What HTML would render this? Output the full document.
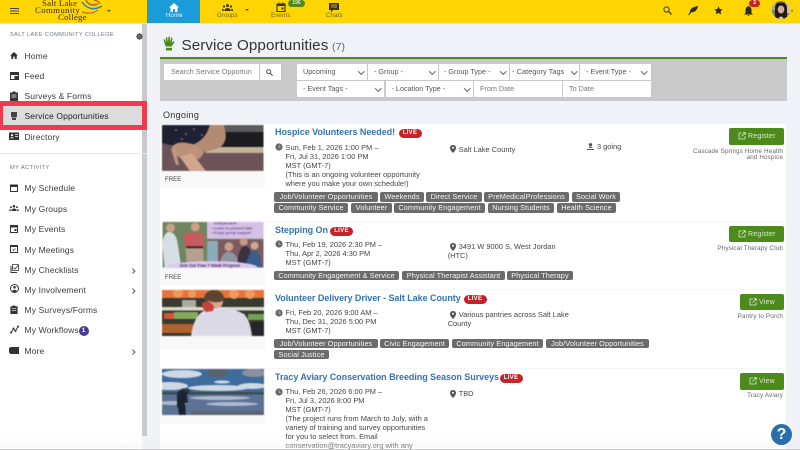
<!DOCTYPE html>
<html><head><meta charset="utf-8"><style>
html,body{margin:0;padding:0;width:800px;height:450px;overflow:hidden;background:#f0f2f7}
#r{position:absolute;left:0;top:0;width:800px;height:450px;overflow:hidden;font-family:"Liberation Sans",sans-serif;filter:blur(.35px)}
.a,.t,.tag,svg{position:absolute}
.t{white-space:nowrap;color:#444;font-size:8px;letter-spacing:.1px;line-height:9px}
.s{font-size:8.5px;color:#3a3a3a;letter-spacing:.13px;left:24.5px}
.nav{font-size:6px;color:#ddd;letter-spacing:.2px}
.h{font-size:9px;font-weight:bold;color:#3473b0;letter-spacing:-.05px;left:275px;line-height:9px}
.tag{background:#6b6b6b;color:#f6f6f6;font-size:7.3px;letter-spacing:.1px;height:9.5px;line-height:9.5px;text-align:center;border-radius:2px;white-space:nowrap}
.live{position:absolute;background:#c5222a;color:#fff;font-size:6px;font-weight:bold;height:9px;line-height:9px;width:23px;text-align:center;border-radius:5px;letter-spacing:.3px}
.btn{position:absolute;background:#4c8a1c;border-radius:2px;height:16.5px}
.bt{font-size:7px;color:#dfead4;letter-spacing:.2px}
.f{position:absolute;background:#fff;height:16px;line-height:16px;color:#555;font-size:7.2px;letter-spacing:.02px;padding-left:6px;box-sizing:border-box;white-space:nowrap;overflow:hidden}
.f i{position:absolute;right:4px;top:4.5px;width:3.5px;height:3.5px;border-right:.8px solid #666;border-bottom:.8px solid #666;transform:rotate(45deg)}
.free{position:absolute;left:160px;width:105px;background:#f8f8f8}
.fr{left:165px;font-size:6.1px;color:#444;letter-spacing:0}
.org{font-size:6.3px;color:#666;text-align:right;right:17px;line-height:6px;letter-spacing:.13px}
.d{left:285.5px;line-height:9.1px;color:#444;font-size:7.4px;letter-spacing:.02px}
.ic{fill:#333}
.ch{position:absolute;left:130.5px;width:2.5px;height:2.5px;border-top:.8px solid #555;border-right:.8px solid #555;transform:rotate(45deg)}
.img{filter:blur(.6px)}
</style></head><body><div id="r">

<!-- top bar -->
<div class="a" style="left:0;top:0;width:800px;height:23px;background:#ffd500"></div>
<div class="a" style="left:0;top:23px;width:800px;height:1px;background:#e6e6e6"></div>
<div class="a" style="left:10px;top:8px;width:9px;height:1px;background:#444;box-shadow:0 2.5px 0 #444,0 5px 0 #444"></div>
<div class="t" style="left:42px;top:-1px;font:8.8px/8px 'Liberation Serif',serif;color:#332c10;letter-spacing:.2px">Salt Lake</div>
<div class="t" style="left:35px;top:6px;font:8.8px/8px 'Liberation Serif',serif;color:#332c10;letter-spacing:.35px">Community</div>
<div class="t" style="left:58px;top:13px;font:8.8px/8px 'Liberation Serif',serif;color:#332c10;letter-spacing:.2px">College</div>
<svg style="left:81px;top:0" width="22" height="14" viewBox="0 0 22 14" fill="none"><path d="M1 2Q9 13 21 6" stroke="#2b83b5" stroke-width="1.4"/><path d="M5 0Q8 7 17 4" stroke="#a87419" stroke-width="1.6"/><path d="M13 0Q18 1 19 4" stroke="#c0392b" stroke-width="1"/><path d="M1 12Q10 15 17 10" stroke="#b65b1d" stroke-width="1"/></svg>
<div class="a" style="left:107px;top:9.5px;border:2px solid transparent;border-top:2.5px solid #555;border-bottom:0"></div>

<div class="a" style="left:147px;top:0;width:53px;height:23px;background:#1a9cd8"></div>
<svg style="left:169px;top:3px" width="10" height="9" viewBox="0 0 10 9"><path d="M5 0L0 4.5H1.5V9H4V6H6V9H8.5V4.5H10Z" fill="#fff"/></svg>
<div class="t nav" style="left:166px;top:12px;color:#e8f4fb">Home</div>
<svg style="left:222px;top:4px" width="11" height="7" viewBox="0 0 11 7"><g fill="#3a3318"><circle cx="5.5" cy="1.5" r="1.5"/><circle cx="2" cy="2.5" r="1.1"/><circle cx="9" cy="2.5" r="1.1"/><path d="M2.5 7V5.5Q5.5 2.5 8.5 5.5V7ZM0 7V5.5L1.5 4.5 1.8 7ZM11 7V5.5L9.5 4.5 9.2 7Z"/></g></svg>
<div class="t nav" style="left:217px;top:12px;color:#6e6320">Groups</div>
<div class="a" style="left:245px;top:8.5px;border:2px solid transparent;border-top:2.5px solid #444;border-bottom:0"></div>
<svg style="left:276px;top:2px" width="10" height="10" viewBox="0 0 10 10"><path d="M1 2H9V9.5H1Z" fill="none" stroke="#3a3318" stroke-width="1.1"/><path d="M1 2H9V4H1ZM2.5 0.5H3.5V2H2.5ZM6.5 0.5H7.5V2H6.5ZM5.5 5.5H7.5V7.5H5.5Z" fill="#3a3318"/></svg>
<div class="a" style="left:288px;top:0;width:17px;height:7px;background:#4c8a1c;border-radius:4px;color:#dfead4;font:bold 5px/7px 'Liberation Sans',sans-serif;text-align:center">196</div>
<div class="t nav" style="left:271px;top:12px;color:#6e6320">Events</div>
<svg style="left:329px;top:3px" width="10" height="10" viewBox="0 0 10 10"><path d="M0 0H10V7H4L2 9.5V7H0Z" fill="#3a3318"/><path d="M2 2H8M2 4H8" stroke="#ffd500" stroke-width=".7"/></svg>
<div class="t nav" style="left:326px;top:12px;color:#6e6320">Chats</div>

<svg style="left:663px;top:6px" width="9" height="9" viewBox="0 0 9 9" fill="none" stroke="#4a4420" stroke-width="1.1"><circle cx="3.5" cy="3.5" r="2.6"/><path d="M5.5 5.5L8.5 8.5" stroke-width="1.4"/></svg>
<svg style="left:688px;top:6px" width="10" height="9" viewBox="0 0 10 9"><path d="M0 9L2 6Q1.5 1.5 10 0Q9 6 3.5 6.3L1 9Z" fill="#2f2c16"/></svg>
<svg style="left:714px;top:6px" width="9" height="9" viewBox="0 0 24 24"><path d="M12 1l3.4 7.3 7.6.9-5.6 5.3 1.5 7.9L12 18.400 5.100 22.400l1.500-7.900L1 9.200l7.600-.9z" fill="#2f2c16"/></svg>
<svg style="left:744px;top:6px" width="9" height="10" viewBox="0 0 9 10"><path d="M4.5 0Q7.5 1 7.5 4V7L9 8.5H0L1.5 7V4Q1.5 1 4.5 0ZM3.3 9H5.7Q4.5 10.5 3.3 9Z" fill="#2f2c16"/></svg>
<div class="a" style="left:749px;top:0;width:11px;height:7px;background:#c5222a;border-radius:4px;color:#fff;font:bold 5px/7px 'Liberation Sans',sans-serif;text-align:center">3</div>
<svg style="left:772px;top:1px" width="18" height="18" viewBox="0 0 18 18"><defs><clipPath id="av"><circle cx="9" cy="9" r="9"/></clipPath></defs><g clip-path="url(#av)"><rect width="18" height="18" fill="#7d8170"/><rect x="13" width="5" height="12" fill="#c5c8b8"/><rect width="4" height="9" fill="#a7ab98"/><path d="M3 18V7Q3 1.500 9 1.500 15 1.500 15 7V18Z" fill="#221a18"/><ellipse cx="9" cy="8.500" rx="3.300" ry="4" fill="#d5ad94"/><path d="M6 18Q9 13 12 18Z" fill="#e2c2ad"/></g></svg>
<div class="a" style="left:791px;top:9.5px;border:1.5px solid transparent;border-top:2px solid #444;border-bottom:0"></div>

<!-- sidebar -->
<div class="a" style="left:0;top:24px;width:142px;height:426px;background:#fff"></div>
<div class="a" style="left:142px;top:24px;width:5px;height:412px;background:#c9c9c9"></div>
<div class="t" style="left:10px;top:32px;font-size:5.6px;color:#6f7780;letter-spacing:.4px;line-height:7px">SALT LAKE COMMUNITY COLLEGE</div>
<svg style="left:136px;top:33px" width="7" height="7" viewBox="0 0 7 7"><circle cx="3.5" cy="3.5" r="2.2" fill="none" stroke="#555" stroke-width="1.5"/><path d="M3.5 0V7M0 3.5H7M1 1L6 6M6 1L1 6" stroke="#555" stroke-width=".7"/></svg>

<svg style="left:10px;top:52px" width="8" height="7" viewBox="0 0 10 9"><path d="M5 0L0 4.5H1.5V9H4V6H6V9H8.5V4.5H10Z" class="ic"/></svg>
<div class="t s" style="top:51.5px">Home</div>
<svg style="left:10px;top:72px" width="9" height="8" viewBox="0 0 9 8"><path d="M.5.5H8.5V7.5H.5Z" fill="none" stroke="#333"/><path d="M1 1H8V3H1ZM4.5 4H8V7H4.5Z" class="ic"/></svg>
<div class="t s" style="top:71.5px">Feed</div>
<svg style="left:10px;top:91px" width="8" height="10" viewBox="0 0 8 10"><path d="M0 1.5H2.5V.5H5.5V1.5H8V10H0Z" class="ic"/><path d="M1.5 4H6.5M1.5 6H6.5" stroke="#fff" stroke-width=".7"/></svg>
<div class="t s" style="top:92px">Surveys &amp; Forms</div>

<div class="a" style="left:0;top:101px;width:147px;height:28.5px;background:#ee3b4f"></div>
<div class="a" style="left:3px;top:106px;width:139px;height:19px;background:#dcdcdc"></div>
<svg style="left:10px;top:111px" width="8" height="9" viewBox="0 0 8 9"><path d="M1 1H7V5Q7 6.5 5.5 6.5H2.5Q1 6.5 1 5ZM2 7H6V9H2Z" fill="#444"/></svg>
<div class="t s" style="top:112px;color:#222;letter-spacing:.14px">Service Opportunities</div>

<svg style="left:9px;top:132px" width="10" height="8" viewBox="0 0 10 8"><path d="M0 .5H10V8H0Z" class="ic"/><path d="M1.5 5.8H4.500M6 2.500H9M6 4.500H9" stroke="#fff" stroke-width=".8"/><circle cx="3" cy="3.2" r="1.1" fill="#fff"/></svg>
<div class="t s" style="top:132.5px">Directory</div>
<div class="a" style="left:0;top:153px;width:147px;height:1px;background:#e8e8e8"></div>
<div class="t" style="left:10px;top:165px;font-size:5.7px;color:#6f7780;letter-spacing:.4px;line-height:7px">MY ACTIVITY</div>

<svg style="left:10px;top:184px" width="8" height="8" viewBox="0 0 8 8"><path d="M.5 1H7.5V7.5H.5Z" fill="none" stroke="#333"/><path d="M.5 1H7.5V3H.5Z" class="ic"/></svg>
<div class="t s" style="top:184px">My Schedule</div>
<svg style="left:9px;top:205px" width="10" height="6" viewBox="0 0 11 7"><g fill="#333"><circle cx="5.5" cy="1.5" r="1.5"/><circle cx="2" cy="2.5" r="1.1"/><circle cx="9" cy="2.5" r="1.1"/><path d="M2.5 7V5.5Q5.5 2.5 8.5 5.5V7ZM0 7V5.5L1.5 4.5 1.8 7ZM11 7V5.5L9.5 4.5 9.2 7Z"/></g></svg>
<div class="t s" style="top:204.5px">My Groups</div>
<svg style="left:10px;top:224px" width="8" height="9" viewBox="0 0 8 9"><path d="M.5 1.5H7.5V8.5H.5Z" fill="none" stroke="#333"/><path d="M.5 1.5H7.5V3.5H.5ZM4.5 5H6.5V7H4.5Z" class="ic"/></svg>
<div class="t s" style="top:225px">My Events</div>
<svg style="left:10px;top:244px" width="8" height="9" viewBox="0 0 8 9"><path d="M.5 1.5H7.5V8.5H.5Z" fill="none" stroke="#333"/><path d="M.5 1.5H7.5V3H.5Z" class="ic"/><path d="M2.5 5.5L3.5 6.5 5.5 4.5" stroke="#333" stroke-width=".7" fill="none"/></svg>
<div class="t s" style="top:245.5px">My Meetings</div>
<svg style="left:10px;top:264px" width="9" height="9" viewBox="0 0 9 9" fill="none" stroke="#333"><path d="M1 2V8.5H7"/><path d="M2.5.5H8.5V6.5H2.5Z" stroke-width=".8"/><path d="M3.5 3.5L5 5 8 1.5" stroke-width=".8"/></svg>
<div class="t s" style="top:265.5px">My Checklists</div>
<div class="ch" style="top:269px"></div>
<svg style="left:10px;top:284px" width="9" height="9" viewBox="0 0 9 9"><circle cx="4.5" cy="4.5" r="4" fill="none" stroke="#333"/><circle cx="4.5" cy="3.3" r="1.3" class="ic"/><path d="M2 7Q4.5 4.5 7 7L4.5 8.5Z" class="ic"/></svg>
<div class="t s" style="top:285.5px">My Involvement</div>
<div class="ch" style="top:289px"></div>
<svg style="left:10px;top:305px" width="8" height="9" viewBox="0 0 8 10"><path d="M0 1.5H2.5V.5H5.5V1.5H8V10H0Z" class="ic"/><path d="M1.5 4H6.5M1.5 6H6.5" stroke="#fff" stroke-width=".7"/></svg>
<div class="t s" style="top:306px">My Surveys/Forms</div>
<svg style="left:10px;top:325px" width="9" height="9" viewBox="0 0 9 9"><path d="M1 8L3.5 3.5 5.5 6 8 1.5" fill="none" stroke="#333"/><circle cx="1" cy="7.5" r="1" class="ic"/><circle cx="3.5" cy="3.5" r="1" class="ic"/><circle cx="5.5" cy="6" r="1" class="ic"/><circle cx="8" cy="1.5" r="1" class="ic"/></svg>
<div class="t s" style="top:326px">My Workflows</div>
<div class="a" style="left:78.5px;top:326px;width:10px;height:10px;border-radius:50%;background:#4b3a96;color:#fff;font:bold 6.5px/10px 'Liberation Sans',sans-serif;text-align:center">1</div>
<svg style="left:9px;top:347px" width="10" height="7" viewBox="0 0 10 7"><path d="M1.5 0H10V7H1.5L0 5.5V1.5Z" class="ic"/></svg>
<div class="t s" style="top:346.5px">More</div>
<div class="ch" style="top:350px"></div>

<!-- title -->
<svg style="left:163px;top:36px" width="12" height="15" viewBox="0 0 12 15"><path d="M2 9L0.5 3.5 1.8 3.2 3 6.5 2.8 1.3H4.2L4.8 6 5.6.6H7L6.8 6 8.3 1.5 9.6 2 8.5 7 10.3 5 11.5 6 8.5 10.5H3Z" fill="#4c8a1c"/><path d="M3 11.8H9V14.5H3Z" fill="#4c8a1c"/></svg>
<div class="t" style="left:181.5px;top:37px;font-size:15.2px;line-height:17px;color:#333;letter-spacing:.08px">Service Opportunities</div>
<div class="t" style="left:332px;top:41px;font-size:10.5px;line-height:12px;color:#666">(7)</div>

<div class="a" style="left:160px;top:56.5px;width:627px;height:3px;background:#4c8a1c"></div>
<div class="a" style="left:160px;top:59px;width:627px;height:42px;background:#c9c9c9"></div>

<div class="f" style="left:164px;top:64px;width:95px;padding-left:7px;color:#777;font-size:7.2px;letter-spacing:0">Search Service Opportun</div>
<div class="a" style="left:260px;top:64px;width:21px;height:16px;background:#fff"></div>
<svg style="left:266px;top:68.5px" width="7" height="7" viewBox="0 0 9 9" fill="none" stroke="#444" stroke-width="1.2"><circle cx="3.5" cy="3.5" r="2.6"/><path d="M5.5 5.5L8.5 8.5"/></svg>

<div class="f" style="left:297px;top:64px;width:70px;">Upcoming<i></i></div>
<div class="f" style="left:368px;top:64px;width:70px">- Group -<i></i></div>
<div class="f" style="left:439px;top:64px;width:70px;padding-left:5px">- Group Type -<i></i></div>
<div class="f" style="left:510px;top:64px;width:69px;padding-left:2px;font-size:7.4px">- Category Tags<i style="right:3px"></i></div>
<div class="f" style="left:580px;top:64px;width:70.5px">- Event Type -<i></i></div>
<div class="f" style="left:297px;top:81px;width:87px">- Event Tags -<i></i></div>
<div class="f" style="left:385.5px;top:81px;width:87.5px">- Location Type -<i></i></div>
<div class="f" style="left:474px;top:81px;width:88px;color:#777">From Date</div>
<div class="f" style="left:563px;top:81px;width:87.5px;color:#777">To Date</div>

<div class="t" style="left:163px;top:110px;font-size:9px;line-height:11px;color:#333;letter-spacing:.3px">Ongoing</div>

<!-- list background -->
<div class="a" style="left:160px;top:124px;width:626px;height:326px;background:#fff"></div>
<div class="a" style="left:160px;top:220.5px;width:626px;height:1.5px;background:#f5f6f8"></div>
<div class="a" style="left:160px;top:288.5px;width:626px;height:1px;background:#f5f6f8"></div>
<div class="a" style="left:160px;top:368px;width:626px;height:1px;background:#f5f6f8"></div>

<!-- item images -->
<div class="free" style="top:171px;height:17px"></div>
<div class="free" style="top:267px;height:18px"></div>
<div class="free" style="top:336px;height:13px"></div>
<div class="free" style="top:415px;height:9px"></div>

<svg class="img" style="left:162px;top:125px" width="101.5" height="46" viewBox="0 0 102 46"><rect width="102" height="46" fill="#6d5359"/><rect x="48" width="54" height="8" fill="#5b5b5d"/><rect x="48" y="7" width="54" height="15" fill="#1d1d20"/><rect x="44" y="22" width="58" height="6" fill="#c4b49a"/><path d="M0 0H50V14L30 20 8 20 0 18Z" fill="#1c2233"/><g fill="#b8546a"><circle cx="14" cy="5" r="1"/><circle cx="24" cy="9" r="1"/><circle cx="32" cy="4" r="1"/><circle cx="40" cy="10" r="1"/><circle cx="20" cy="14" r="1"/></g><path d="M48 0H62Q67 14 60 21 50 27 38 27L30 20Q44 15 48 0Z" fill="#b58a74"/><path d="M10 22Q14 16 26 18 38 20 42 28 38 36 30 35 14 36 10 22Z" fill="#bd9079"/><path d="M18 32L30 28 44 46H28Z" fill="#d2a58e"/><path d="M9 24L13 22 17 40 14 40Z" fill="#c29680"/></svg>

<svg class="img" style="left:162px;top:222px" width="102" height="45.5" viewBox="0 0 102 46"><rect width="102" height="46" fill="#6f8560"/><rect x="45" y="18" width="57" height="28" fill="#7d5a60"/><rect x="45" y="19" width="11" height="27" fill="#89abba"/><rect x="45" width="57" height="17" fill="#d5c0e6"/><path d="M6 10Q13 10 15 20L19 46H2L0 24Q0 12 6 10Z" fill="#d5dfe5"/><circle cx="8" cy="6" r="4.5" fill="#caa08a"/><path d="M21 13Q30 8 42 13V26H23Z" fill="#c85a60"/><circle cx="33" cy="5" r="4.5" fill="#caa08a"/><path d="M23 26H41L42 46H25Z" fill="#b3a08e"/><rect x="24" y="24.5" width="17" height="2" fill="#3a2826"/><path d="M58 46Q58 32 66 30 76 30 78 46Z" fill="#8c95a0"/><circle cx="67" cy="25" r="4.5" fill="#c99f88"/><path d="M76 38Q78 24 84 24 90 26 90 38V46H76Z" fill="#3a3340"/><circle cx="82" cy="20" r="4" fill="#c69a84"/><path d="M84 46Q86 30 94 28 100 32 100 46Z" fill="#3a5d8c"/><circle cx="93" cy="24" r="4" fill="#d0a78e"/><ellipse cx="50" cy="46" rx="46" ry="6.5" fill="#dcc9ec"/><text x="17" y="45.5" font-family="Liberation Sans" font-size="4.2" font-weight="bold" fill="#4a2e70">Join Our Free 7-Week Program</text><g font-family="Liberation Sans" font-size="4.1" fill="#4a2e70"><text x="52" y="2.5">Independent</text><text x="50" y="7.5">• Learn to prevent falls</text><text x="50" y="12">• Enjoy group support</text></g></svg>

<svg class="img" style="left:162px;top:290px" width="102" height="46" viewBox="0 0 102 46"><rect width="102" height="46" fill="#3a3b30"/><rect width="102" height="8" fill="#e8733a"/><g fill="#f0985a"><circle cx="16" cy="3" r="5"/><circle cx="30" cy="4" r="4"/><circle cx="72" cy="4" r="5"/><circle cx="88" cy="4" r="5"/></g><rect y="17" width="102" height="3.5" fill="#d8d8ce"/><rect x="20" y="10" width="14" height="7" fill="#a8aca0"/><rect y="23" x="2" width="10" height="6" fill="#d4553a"/><rect y="22" x="12" width="24" height="7" fill="#86a85a"/><rect y="34" x="0" width="32" height="9" fill="#b0622f"/><rect x="86" y="24" width="16" height="6" fill="#6fa552"/><path d="M89 32H102V46H89Z" fill="#26262a"/><path d="M29 46Q32 24 44 20 52 15 60 17 70 18 82 24 88 30 90 46Z" fill="#dcd9e6"/><ellipse cx="52" cy="8.5" rx="10" ry="8.5" fill="#5a4632"/><path d="M46 10Q52 14 61 11 61 17 55 18 50 20 47 17Z" fill="#d9a78e"/><path d="M40 13L47 11 52 16 51 21 44 22Q40 19 40 13Z" fill="#c9423a"/></svg>

<svg class="img" style="left:162px;top:369px" width="102" height="46" viewBox="0 0 102 46"><rect width="102" height="46" fill="#5c7294"/><rect width="102" height="23" fill="#3f6c9c"/><g fill="#cfd9e6"><ellipse cx="20" cy="5" rx="20" ry="4"/><ellipse cx="8" cy="17" rx="18" ry="4"/><ellipse cx="56" cy="19" rx="30" ry="3"/><ellipse cx="60" cy="13" rx="8" ry="1.5"/><ellipse cx="90" cy="17" rx="14" ry="3"/></g><ellipse cx="56" cy="4" rx="11" ry="4" fill="#5a626c"/><ellipse cx="92" cy="4" rx="12" ry="4" fill="#8a919a"/><rect y="23" width="102" height="2.5" fill="#3f4a50"/><g fill="#aab9ce"><ellipse cx="58" cy="29" rx="30" ry="2"/><ellipse cx="70" cy="35" rx="26" ry="2"/><ellipse cx="10" cy="34" rx="16" ry="2"/></g><rect y="42" x="30" width="72" height="4" fill="#5a6470"/><path d="M15 26Q16 21 20 21 24 22 26 24L25 26 26 34H23L24 46H17L16 38H15Z" fill="#1b2434"/><path d="M18 21Q22 17 29 22L26 24Q22 22 18 21Z" fill="#30363e"/></svg>

<!-- item 1 -->
<div class="t fr" style="top:175px">FREE</div>
<div class="t h" style="top:128px">Hospice Volunteers Needed!</div>
<div class="live" style="left:398.5px;top:129px">LIVE</div>
<svg style="left:275px;top:143px" width="8" height="8" viewBox="0 0 8 8"><circle cx="4" cy="4" r="3.6" fill="#666"/><path d="M4 1.8V4.2L5.8 5" stroke="#ddd" stroke-width=".6" fill="none"/></svg>
<div class="t d" style="top:142.7px">Sun, Feb 1, 2026 1:00 PM –<br>Fri, Jul 31, 2026 1:00 PM<br>MST (GMT-7)<br>(This is an ongoing volunteer opportunity<br>where you make your own schedule!)</div>
<svg style="left:450px;top:145px" width="6" height="8" viewBox="0 0 6 8"><path d="M3 0Q6 0 6 3 6 5 3 8 0 5 0 3 0 0 3 0Z" fill="#555"/><circle cx="3" cy="2.8" r="1" fill="#fff"/></svg>
<div class="t d" style="left:458.7px;top:144.8px">Salt Lake County</div>
<svg style="left:587px;top:143px" width="7" height="7" viewBox="0 0 7 7"><circle cx="3.5" cy="1.8" r="1.7" fill="#555"/><path d="M1.3 5Q3.5 2.5 5.7 5H1.3ZM0 6H7V7H0Z" fill="#555"/></svg>
<div class="t" style="left:597px;top:142px;font-size:7.4px;color:#444;letter-spacing:0">3 going</div>
<div class="btn" style="top:128px;left:728.5px;width:55px"></div>
<svg style="left:738px;top:132px" width="8" height="8" viewBox="0 0 8 8" fill="none" stroke="#dfead4" stroke-width=".8"><path d="M4 1H1V7H7V4M3.5 4.5L7.2.8M5 .7H7.3V3"/></svg>
<div class="t bt" style="left:748px;top:132px">Register</div>
<div class="t org" style="top:149px">Cascade Springs Home Health<br>and Hospice</div>
<div class="tag" style="left:274px;top:192px;width:104px">Job/Volunteer Opportunities</div>
<div class="tag" style="left:380px;top:192px;width:44px">Weekends</div>
<div class="tag" style="left:426px;top:192px;width:56px">Direct Service</div>
<div class="tag" style="left:484px;top:192px;width:85px">PreMedicalProfessions</div>
<div class="tag" style="left:572px;top:192px;width:48px">Social Work</div>
<div class="tag" style="left:274px;top:203px;width:74px">Community Service</div>
<div class="tag" style="left:351px;top:203px;width:41px">Volunteer</div>
<div class="tag" style="left:394px;top:203px;width:91px">Community Engagement</div>
<div class="tag" style="left:488px;top:203px;width:66px">Nursing Students</div>
<div class="tag" style="left:557px;top:203px;width:59px">Health Science</div>

<!-- item 2 -->
<div class="t fr" style="top:272.5px">FREE</div>
<div class="t h" style="top:225.5px">Stepping On</div>
<div class="live" style="left:330px;top:226.5px">LIVE</div>
<svg style="left:275px;top:240px" width="8" height="8" viewBox="0 0 8 8"><circle cx="4" cy="4" r="3.6" fill="#666"/><path d="M4 1.8V4.2L5.8 5" stroke="#ddd" stroke-width=".6" fill="none"/></svg>
<div class="t d" style="top:239.7px">Thu, Feb 19, 2026 2:30 PM –<br>Thu, Apr 2, 2026 4:30 PM<br>MST (GMT-7)</div>
<svg style="left:450px;top:242.5px" width="6" height="8" viewBox="0 0 6 8"><path d="M3 0Q6 0 6 3 6 5 3 8 0 5 0 3 0 0 3 0Z" fill="#555"/><circle cx="3" cy="2.8" r="1" fill="#fff"/></svg>
<div class="t d" style="left:458.7px;top:242.2px">3491 W 9000 S, West Jordan</div>
<div class="t d" style="left:447.7px;top:251.2px">(HTC)</div>
<div class="btn" style="top:225.7px;left:728.5px;width:55px"></div>
<svg style="left:738px;top:229.5px" width="8" height="8" viewBox="0 0 8 8" fill="none" stroke="#dfead4" stroke-width=".8"><path d="M4 1H1V7H7V4M3.5 4.5L7.2.8M5 .7H7.3V3"/></svg>
<div class="t bt" style="left:748px;top:229.5px">Register</div>
<div class="t org" style="top:246px">Physical Therapy Club</div>
<div class="tag" style="left:274px;top:270.7px;width:125px">Community Engagement &amp; Service</div>
<div class="tag" style="left:402px;top:270.7px;width:103px">Physical Therapist Assistant</div>
<div class="tag" style="left:507px;top:270.7px;width:66px">Physical Therapy</div>

<!-- item 3 -->
<div class="t h" style="top:293.5px">Volunteer Delivery Driver - Salt Lake County</div>
<div class="live" style="left:463.5px;top:294.5px">LIVE</div>
<svg style="left:275px;top:309px" width="8" height="8" viewBox="0 0 8 8"><circle cx="4" cy="4" r="3.6" fill="#666"/><path d="M4 1.8V4.2L5.8 5" stroke="#ddd" stroke-width=".6" fill="none"/></svg>
<div class="t d" style="top:307.7px">Fri, Feb 20, 2026 9:00 AM –<br>Thu, Dec 31, 2026 5:00 PM<br>MST (GMT-7)</div>
<svg style="left:450px;top:311px" width="6" height="8" viewBox="0 0 6 8"><path d="M3 0Q6 0 6 3 6 5 3 8 0 5 0 3 0 0 3 0Z" fill="#555"/><circle cx="3" cy="2.8" r="1" fill="#fff"/></svg>
<div class="t d" style="left:458.7px;top:309.8px">Various pantries across Salt Lake</div>
<div class="t d" style="left:447.7px;top:319.2px">County</div>
<div class="btn" style="top:293.7px;left:740px;width:43.5px"></div>
<svg style="left:749px;top:298px" width="8" height="8" viewBox="0 0 8 8" fill="none" stroke="#dfead4" stroke-width=".8"><path d="M4 1H1V7H7V4M3.5 4.5L7.2.8M5 .7H7.3V3"/></svg>
<div class="t bt" style="left:759px;top:297.5px">View</div>
<div class="t org" style="top:313.7px">Pantry to Porch</div>
<div class="tag" style="left:274px;top:338.7px;width:104px">Job/Volunteer Opportunities</div>
<div class="tag" style="left:380px;top:338.7px;width:69px">Civic Engagement</div>
<div class="tag" style="left:452px;top:338.7px;width:91px">Community Engagement</div>
<div class="tag" style="left:546px;top:338.7px;width:103px">Job/Volunteer Opportunities</div>
<div class="tag" style="left:274px;top:349.7px;width:55px">Social Justice</div>

<!-- item 4 -->
<div class="t h" style="top:372.8px">Tracy Aviary Conservation Breeding Season Surveys</div>
<div class="live" style="left:499.5px;top:373.5px">LIVE</div>
<svg style="left:275px;top:388px" width="8" height="8" viewBox="0 0 8 8"><circle cx="4" cy="4" r="3.6" fill="#666"/><path d="M4 1.8V4.2L5.8 5" stroke="#ddd" stroke-width=".6" fill="none"/></svg>
<div class="t d" style="top:386.9px">Thu, Feb 26, 2026 6:00 PM –<br>Fri, Jul 3, 2026 8:00 PM<br>MST (GMT-7)<br>(The project runs from March to July, with a<br>variety of training and survey opportunities<br>for you to select from. Email<br>conservation@tracyaviary.org with any</div>
<svg style="left:450px;top:390px" width="6" height="8" viewBox="0 0 6 8"><path d="M3 0Q6 0 6 3 6 5 3 8 0 5 0 3 0 0 3 0Z" fill="#555"/><circle cx="3" cy="2.8" r="1" fill="#fff"/></svg>
<div class="t d" style="left:458.7px;top:389.2px">TBD</div>
<div class="btn" style="top:373px;left:740px;width:43.5px"></div>
<svg style="left:749px;top:377px" width="8" height="8" viewBox="0 0 8 8" fill="none" stroke="#dfead4" stroke-width=".8"><path d="M4 1H1V7H7V4M3.5 4.5L7.2.8M5 .7H7.3V3"/></svg>
<div class="t bt" style="left:759px;top:377px">View</div>
<div class="t org" style="top:393px">Tracy Aviary</div>

<div class="a" style="left:0;top:438px;width:800px;height:10px;background:linear-gradient(rgba(240,240,240,0),rgba(238,238,238,.45))"></div>
<div class="a" style="left:0;top:448.5px;width:800px;height:1.5px;background:#c9c9c9"></div>
<div class="a" style="left:771px;top:424px;width:21px;height:21px;border-radius:50%;background:#2a6ead;color:#fff;font:bold 16px/21px 'Liberation Sans',sans-serif;text-align:center">?</div>
</div></body></html>
